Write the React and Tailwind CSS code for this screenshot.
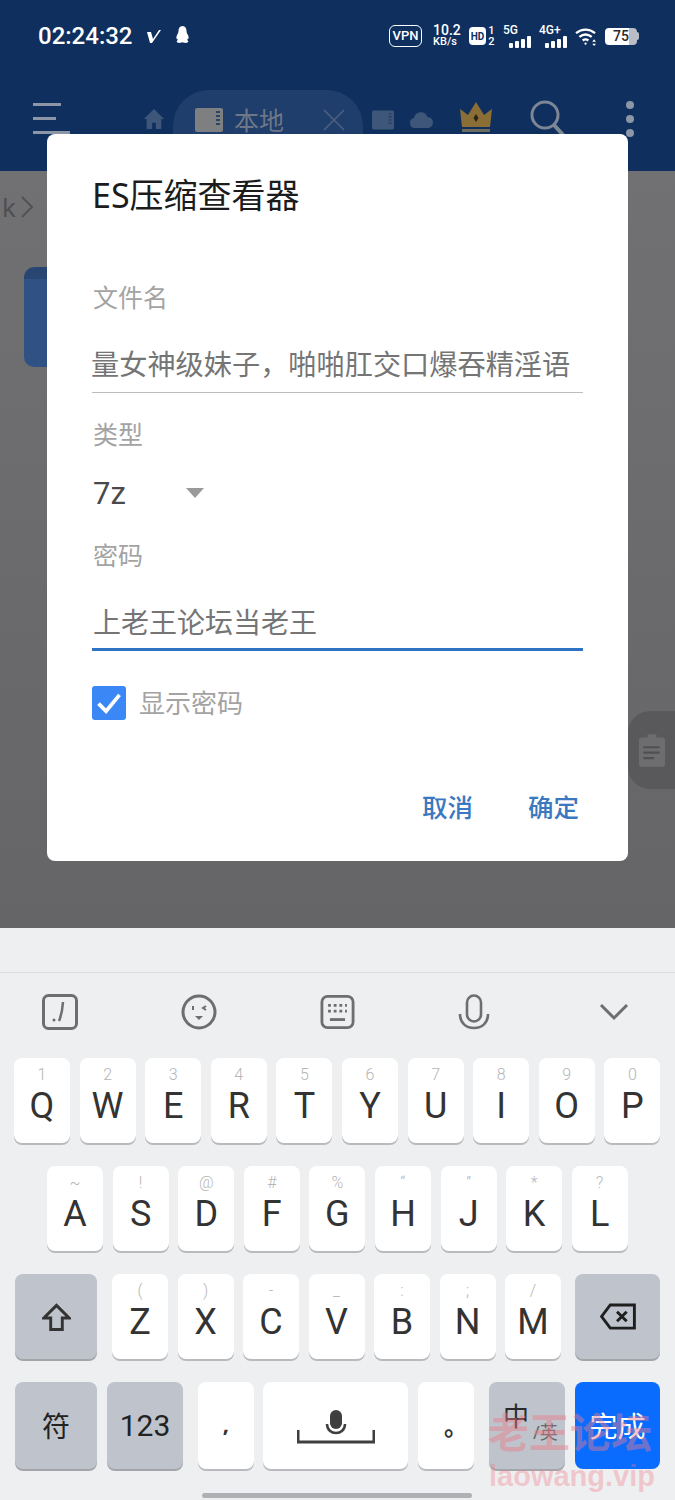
import React from 'react';

const row1 = [['1','Q'],['2','W'],['3','E'],['4','R'],['5','T'],['6','Y'],['7','U'],['8','I'],['9','O'],['0','P']];
const row2 = [['~','A'],['!','S'],['@','D'],['#','F'],['%','G'],['“','H'],['”','J'],['*','K'],['?','L']];
const row3 = [['(','Z'],[')','X'],['-','C'],['_','V'],[':','B'],[';','N'],['/','M']];

function LetterKey({ hint, label }) {
  return (
    <div className="relative w-[56px] h-[85px] bg-white rounded-[8px] shadow-[0_2px_0_#b9babe] flex flex-col items-center font-['Roboto',sans-serif]">
      <span className="mt-[7px] h-[20px] leading-[20px] text-[16px] font-light text-[#b5b5b5]">{hint}</span>
      <span className="mt-0 leading-[42px] text-[36px] text-[#333333]">{label}</span>
    </div>
  );
}

function Sd({ className }) {
  return (
    <svg viewBox="0 0 28 24" className={className} fill="currentColor">
      <path d="M2 0h24a2 2 0 0 1 2 2v20a2 2 0 0 1-2 2H2a2 2 0 0 1-2-2V2a2 2 0 0 1 2-2z" />
      <path d="M21 3h4v2h-4zM21 7h4v2h-4zM21 11h4v2h-4zM21 15h4v2h-4z" fill="#2c4468" />
    </svg>
  );
}

function Signal({ label, className }) {
  return (
    <div className={`w-[28px] h-[24px] flex flex-col ${className}`}>
      <span className="text-[12px] leading-[12px] font-medium font-['Roboto',sans-serif]">{label}</span>
      <div className="flex items-end justify-end gap-[2px] h-[12px]">
        <span className="w-[4px] h-[5px] bg-white rounded-[1px]" />
        <span className="w-[4px] h-[7px] bg-white rounded-[1px]" />
        <span className="w-[4px] h-[9px] bg-white rounded-[1px]" />
        <span className="w-[4px] h-[12px] bg-white rounded-[1px]" />
      </div>
    </div>
  );
}

function StatusIcons() {
  return (
    <div className="flex items-center text-white ml-[198px]">
      <div className="w-[33px] h-[22px] border-[1.5px] border-white rounded-[6px] flex items-center justify-center text-[13px] font-['Roboto',sans-serif] font-medium">VPN</div>
      <div className="ml-[11px] w-[28px] flex flex-col items-start font-['Roboto',sans-serif] font-medium leading-[11px]">
        <span className="text-[14px]">10.2</span>
        <span className="text-[11px]">KB/s</span>
      </div>
      <div className="ml-[8px] w-[17px] h-[18px] bg-white rounded-[4px] text-[#0f2f5e] flex items-center justify-center text-[10px] font-bold font-['Roboto',sans-serif]">HD</div>
      <div className="ml-[1px] w-[9px] flex flex-col items-center text-[11px] leading-[11px] font-['Roboto',sans-serif] font-medium">
        <span>1</span>
        <span>2</span>
      </div>
      <Signal label="5G" className="ml-[7px]" />
      <Signal label="4G+" className="ml-[8px]" />
      <svg viewBox="0 0 24 20" className="ml-[8px] w-[23px] h-[19px]" fill="none" stroke="white" strokeWidth="2.4">
        <path d="M1 6.500c6-5 14-5 20 0" />
        <path d="M4.500 10.500c4-3.200 9-3.200 13 0" />
        <path d="M8 14.200c2-1.500 4-1.500 6 0" />
        <circle cx="11" cy="17.500" r="1.200" fill="white" stroke="none" />
        <path d="M20 13l2 2.500h-4zM20 20l2-2.500h-4z" fill="white" stroke="none" />
      </svg>
      <div className="ml-[7px] flex items-center">
        <div className="w-[32px] h-[17px] rounded-[4px] bg-[linear-gradient(90deg,#ffffff_75%,#b9bdc5_75%)] flex items-center justify-center text-[#2b2b2b] text-[14px] font-medium font-['Roboto',sans-serif]">75</div>
        <div className="w-[2px] h-[8px] bg-[#b9bdc5] rounded-r-[2px]" />
      </div>
    </div>
  );
}

function Toolbar() {
  return (
    <div className="flex items-start h-[101px]">
      <div className="ml-[33px] mt-[33px] w-[37px] flex flex-col gap-[11px]">
        <span className="block w-[28px] h-[3px] bg-[#8d96a6]" />
        <span className="block w-[23px] h-[3px] bg-[#8d96a6]" />
        <span className="block w-[37px] h-[3px] bg-[#8d96a6]" />
      </div>
      <svg viewBox="0 0 24 24" className="ml-[73px] mt-[37px] w-[22px] h-[24px] text-[#3d5679]" fill="currentColor">
        <path d="M12 1 1 12h3v11h6v-7h4v7h6V12h3z" />
      </svg>
      <div className="ml-[8px] mt-[20px] w-[190px] h-[90px] rounded-[36px] bg-[#1f3e6b] flex items-start pl-[22px] pt-[16px]">
        <Sd className="w-[28px] h-[24px] text-[#7d7f80] mt-[2px]" />
        <span className="ml-[11px] text-[25px] leading-[28px] text-[#6d7787]">本地</span>
        <svg viewBox="0 0 22 22" className="ml-[39px] mt-[3px] w-[22px] h-[22px] text-[#4e6280]" fill="none" stroke="currentColor" strokeWidth="1.5">
          <path d="M1 1l20 20M21 1 1 21" />
        </svg>
      </div>
      <Sd className="ml-[9px] mt-[40px] w-[22px] h-[20px] text-[#3d5679]" />
      <svg viewBox="0 0 24 16" className="ml-[15px] mt-[41px] w-[24px] h-[18px] text-[#3d5679]" fill="currentColor">
        <path d="M6 16a5 5 0 0 1-1-9.900A7 7 0 0 1 18.500 5 5.500 5.500 0 0 1 18.500 16z" />
      </svg>
      <svg viewBox="0 0 32 30" className="ml-[27px] mt-[32px] w-[32px] h-[30px]">
        <path d="M0 7l8 6 8-13 8 13 8-6-2 18H2z" fill="#8a6e36" />
        <path d="M16 12l2.500 4-2.500 4-2.500-4z" fill="#2a2412" />
        <rect x="2" y="27" width="28" height="3" fill="#6d6a5f" />
      </svg>
      <svg viewBox="0 0 38 38" className="ml-[38px] mt-[30px] w-[38px] h-[38px] text-[#7d8694]" fill="none" stroke="currentColor" strokeWidth="3">
        <circle cx="15" cy="15" r="13" />
        <path d="M24 25l11 12" strokeWidth="4" />
      </svg>
      <div className="ml-[58px] mt-[31px] flex flex-col gap-[6px]">
        <span className="block w-[8px] h-[8px] rounded-full bg-[#8d96a6]" />
        <span className="block w-[8px] h-[8px] rounded-full bg-[#8d96a6]" />
        <span className="block w-[8px] h-[8px] rounded-full bg-[#8d96a6]" />
      </div>
    </div>
  );
}

function Dialog() {
  return (
    <div className="absolute left-[47px] top-[134px] w-[581px] h-[727px] bg-white rounded-[8px] pl-[45px] pr-[45px]">
      <h1 className="pt-[39px] text-[34px] leading-[44px] text-[#1c1c1c]">ES压缩查看器</h1>
      <div className="mt-[62px] ml-[1px] text-[25px] leading-[36px] text-[#a3a3a3]">文件名</div>
      <div className="mt-[29px] h-[49px] border-b border-[#bcbcbc] indent-[-1px] text-[28.200px] leading-[40px] text-[#757575] whitespace-nowrap overflow-hidden">量女神级妹子，啪啪肛交口爆吞精淫语</div>
      <div className="mt-[23px] ml-[1px] text-[25px] leading-[36px] text-[#a3a3a3]">类型</div>
      <div className="mt-[20px] ml-[1px] flex items-center h-[44px]">
        <span className="w-[93px] text-[31px] leading-[44px] text-[#4a4a4a] font-['Roboto',sans-serif]">7z</span>
        <span className="w-0 h-0 border-x-[9px] border-x-transparent border-t-[10px] border-t-[#9a9a9a] -mt-[2px]" />
      </div>
      <div className="mt-[21px] ml-[1px] text-[25px] leading-[36px] text-[#a3a3a3]">密码</div>
      <div className="mt-[29px] h-[49px] border-b-[3px] border-[#2f73c4] pl-[1px] text-[28px] leading-[40px] text-[#757575]">上老王论坛当老王</div>
      <div className="mt-[34px] flex items-center">
        <div className="w-[34px] h-[34px] bg-[#3b87f5] rounded-[3px] flex items-center justify-center">
          <svg viewBox="0 0 24 24" className="w-[28px] h-[28px]" fill="none" stroke="white" strokeWidth="3.2">
            <path d="M3 12.500 9.500 19 21 5" />
          </svg>
        </div>
        <span className="ml-[13px] text-[26px] leading-[36px] text-[#a3a3a3]">显示密码</span>
      </div>
      <div className="mt-[68px] flex justify-end gap-[55px] pr-[4px] text-[25.500px] leading-[36px] font-medium text-[#3b78c0]">
        <span>取消</span>
        <span>确定</span>
      </div>
    </div>
  );
}

function KeyboardTools() {
  return (
    <div className="h-[85px] flex items-start text-[#6d6e70]">
      <svg viewBox="0 0 36 36" className="ml-[42px] mt-[21px] w-[36px] h-[36px]" fill="none" stroke="currentColor" strokeWidth="3">
        <rect x="1.500" y="1.500" width="33" height="33" rx="5" />
        <path d="M21 8c-.5 7-1 12-4 19" strokeWidth="2.500" />
        <circle cx="12" cy="26" r="1.500" fill="currentColor" stroke="none" />
      </svg>
      <svg viewBox="0 0 36 36" className="ml-[103px] mt-[21px] w-[36px] h-[36px]" fill="none" stroke="currentColor" strokeWidth="3">
        <circle cx="18" cy="18" r="16" />
        <path d="M12 12v4M25 12l-3 2 3 2" strokeWidth="2" />
        <path d="M14 22h8l-4 4z" fill="currentColor" stroke="none" />
      </svg>
      <svg viewBox="0 0 36 36" className="ml-[103px] mt-[22px] w-[35px] h-[34px]" fill="none" stroke="currentColor" strokeWidth="3">
        <rect x="1.500" y="1.500" width="33" height="33" rx="6" />
        <path d="M8 11h3M14 11h3M20 11h3M26 11h2M8 17h3M14 17h3M20 17h3M26 17h2" strokeWidth="3" />
        <path d="M10 26h16" strokeWidth="3" />
      </svg>
      <svg viewBox="0 0 32 36" className="ml-[103px] mt-[21px] w-[32px] h-[36px]" fill="none" stroke="currentColor" strokeWidth="2.600">
        <rect x="9" y="1.500" width="14" height="26" rx="7" />
        <path d="M2 20c0 9 6 14 14 14s14-5 14-14" />
      </svg>
      <svg viewBox="0 0 30 18" className="ml-[109px] mt-[30px] w-[30px] h-[18px]" fill="none" stroke="currentColor" strokeWidth="3">
        <path d="M2 2l13 13L28 2" />
      </svg>
    </div>
  );
}

function Keyboard() {
  return (
    <div className="h-[572px] bg-[#eeeff1]">
      <div className="h-[45px] border-b border-[#dcdddf]" />
      <KeyboardTools />
      <div className="flex gap-[9.6px] pl-[14px]">
        {row1.map(([h, l]) => <LetterKey key={l} hint={h} label={l} />)}
      </div>
      <div className="flex gap-[9.6px] pl-[47px] mt-[23px]">
        {row2.map(([h, l]) => <LetterKey key={l} hint={h} label={l} />)}
      </div>
      <div className="flex mt-[23px] pl-[15px]">
        <div className="w-[82px] h-[85px] bg-[#bec3cc] rounded-[8px] shadow-[0_2px_0_#a3a5ab] flex items-center justify-center">
          <svg viewBox="0 0 30 30" className="w-[29px] h-[30px]" fill="none" stroke="#333" strokeWidth="3" strokeLinejoin="miter">
            <path d="M15 3 2 16h7v12h12V16h7z" />
          </svg>
        </div>
        <div className="flex gap-[9.500px] ml-[15px]">
          {row3.map(([h, l]) => <LetterKey key={l} hint={h} label={l} />)}
        </div>
        <div className="ml-[14px] w-[85px] h-[85px] bg-[#bec3cc] rounded-[8px] shadow-[0_2px_0_#a3a5ab] flex items-center justify-center">
          <svg viewBox="0 0 38 28" className="w-[38px] h-[27px]" fill="none" stroke="#1f1f1f" strokeWidth="3">
            <path d="M11 2h25v24H11L2 14z" />
            <path d="M18 9l10 10M28 9 18 19" />
          </svg>
        </div>
      </div>
      <div className="flex mt-[23px] pl-[15px] h-[87px]">
        <div className="w-[82px] bg-[#bec3cc] rounded-[8px] shadow-[0_2px_0_#a3a5ab] flex items-center justify-center text-[28px] text-[#222222]">符</div>
        <div className="ml-[10px] w-[76px] bg-[#bec3cc] rounded-[8px] shadow-[0_2px_0_#a3a5ab] flex items-center justify-center text-[30px] text-[#222222] font-['Roboto',sans-serif]">123</div>
        <div className="ml-[15px] w-[56px] bg-white rounded-[8px] shadow-[0_2px_0_#b9babe] flex items-center justify-center text-[22px] text-[#333333] font-bold pb-[4px]">,</div>
        <div className="ml-[9px] w-[145px] bg-white rounded-[8px] shadow-[0_2px_0_#b9babe] flex items-center justify-center">
          <svg viewBox="0 0 78 34" className="w-[78px] h-[34px] mt-[3px]" fill="none" stroke="#3f3f41" strokeWidth="2.500">
            <rect x="33" y="0" width="12" height="19" rx="6" fill="#3f3f41" stroke="none" />
            <path d="M30 14c0 12 18 12 18 0" />
            <path d="M1 20v12h76V20" strokeWidth="3" />
          </svg>
        </div>
        <div className="ml-[10px] w-[56px] bg-white rounded-[8px] shadow-[0_2px_0_#b9babe] flex items-center justify-center pl-[20px] text-[24px] text-[#333333] font-bold">。</div>
        <div className="relative ml-[15px] w-[76px] bg-[#bec3cc] rounded-[8px] shadow-[0_2px_0_#a3a5ab] text-[#2a2a2a]">
          <span className="absolute left-[14px] top-[19px] text-[26px] leading-[30px]">中</span>
          <span className="absolute left-[44px] top-[38px] text-[18px] leading-[24px] text-[#666666]">/英</span>
        </div>
        <div className="ml-[10px] w-[85px] bg-[#0a6cff] rounded-[8px] flex items-center justify-center text-[28px] text-white">完成</div>
      </div>
      <div className="mt-[24px] ml-[202px] w-[270px] h-[5px] rounded-full bg-[#b0b1b5]" />
    </div>
  );
}

export default function App() {
  return (
    <div className="relative w-[675px] h-[1500px] overflow-hidden font-['Noto_Sans','Noto_Sans_CJK_SC',sans-serif]">
      <div className="h-[171px] bg-[#0f2f5e] overflow-hidden">
        <div className="h-[70px] flex items-center pl-[38px] pt-[2px] text-white">
          <span className="w-[96px] text-[24px] font-medium font-['Roboto',sans-serif] whitespace-nowrap">02:24:32</span>
          <svg viewBox="0 0 14 14" className="ml-[13px] w-[14px] h-[14px]" fill="white">
            <path d="M0 3l4 0 2 7L12 1l2 0L5 14 3 14z" />
          </svg>
          <svg viewBox="0 0 16 22" className="ml-[13px] w-[17px] h-[20px]" fill="white">
            <path d="M8 0c3 0 4.500 2.500 4.500 6 0 1 .5 2 1.500 4s1 4-.2 5c-.3-.6-.6-1-.9-1.300 0 1.300.6 2 1.300 2.800 1 1.200-1.500 2.500-4 2-1-.2-1.600-.5-2.200-.5s-1.200.3-2.200.5c-2.500.5-5-.8-4-2 .7-.8 1.300-1.500 1.300-2.800-.3.3-.6.7-.9 1.300-1.200-1-1.200-3-.2-5s1.500-3 1.500-4C3.500 2.500 5 0 8 0z" />
          </svg>
          <StatusIcons />
        </div>
        <Toolbar />
      </div>
      <div className="h-[757px] bg-linear-to-b from-[#717173] to-[#656567] overflow-hidden">
        <div className="pt-[18px] pl-[2px] flex items-center text-[#4f4f51] text-[26px] leading-[36px]">
          <span>k</span>
          <svg viewBox="0 0 14 24" className="ml-[4px] w-[14px] h-[24px]" fill="none" stroke="#525254" strokeWidth="2">
            <path d="M2 2l10 10L2 22" />
          </svg>
        </div>
        <div className="mt-[42px] ml-[24px] w-[30px] h-[100px] rounded-l-[10px] bg-[#2f5183] border-t-[12px] border-[#294673]" />
      </div>
      <Keyboard />
      <Dialog />
      {/* side handle under the dialog */}
      <div className="absolute left-[628px] top-[711px] w-[47px] h-[78px] rounded-l-[22px] bg-[#59595b] flex items-center justify-center">
        <svg viewBox="0 0 24 30" className="w-[26px] h-[33px]" fill="#6d6d6f">
          <path d="M2 3h6V0h8v3h6a2 2 0 0 1 2 2v23a2 2 0 0 1-2 2H2a2 2 0 0 1-2-2V5a2 2 0 0 1 2-2z" />
          <path d="M4 11h15v2H4zM4 16h15v2H4zM4 21h10v2H4z" fill="#505052" />
        </svg>
      </div>
      {/* site watermark */}
      <div className="absolute left-[488px] top-[1409px] w-[175px] text-[41px] leading-[46px] font-bold text-[#f07a86]/45 whitespace-nowrap">老王论坛</div>
      <div className="absolute left-[489px] top-[1457px] text-[29px] leading-[38px] font-bold text-[#f07a86]/35 whitespace-nowrap font-['Liberation_Sans',sans-serif]">laowang.vip</div>
    </div>
  );
}
